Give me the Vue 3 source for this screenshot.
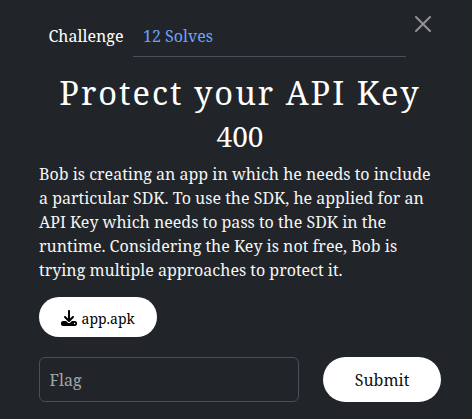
<script setup>
const lines = [
  'Bob is creating an app in which he needs to include',
  'a particular SDK. To use the SDK, he applied for an',
  'API Key which needs to pass to the SDK in the',
  'runtime. Considering the Key is not free, Bob is',
  'trying multiple approaches to protect it.',
]
</script>

<template>
  <main class="modal">
    <header class="top">
      <nav class="tabs">
        <button class="tab active">Challenge</button>
        <button class="tab solves">12 Solves</button>
      </nav>
      <button class="close" aria-label="Close">
        <svg viewBox="0 0 16 16"><path d="M.293.293a1 1 0 0 1 1.414 0L8 6.586 14.293.293a1 1 0 1 1 1.414 1.414L9.414 8l6.293 6.293a1 1 0 0 1-1.414 1.414L8 9.414l-6.293 6.293a1 1 0 0 1-1.414-1.414L6.586 8 .293 1.707a1 1 0 0 1 0-1.414z" /></svg>
      </button>
    </header>
    <h2 class="title">Protect your API Key</h2>
    <h3 class="points">400</h3>
    <p class="description"><span v-for="line in lines" :key="line">{{ line }}</span></p>
    <a class="file">
      <svg viewBox="0 0 512 512"><path d="M288 32c0-17.700-14.300-32-32-32s-32 14.300-32 32v242.700l-73.400-73.400c-12.500-12.500-32.800-12.500-45.300 0s-12.500 32.800 0 45.300l128 128c12.500 12.500 32.800 12.500 45.300 0l128-128c12.500-12.500 12.500-32.800 0-45.300s-32.800-12.500-45.300 0L288 274.700V32zM64 352c-35.300 0-64 28.700-64 64v32c0 35.300 28.700 64 64 64h384c35.300 0 64-28.700 64-64v-32c0-35.300-28.700-64-64-64H346.500l-45.300 45.300c-25 25-65.500 25-90.500 0L165.500 352H64zm368 56a24 24 0 1 1 0 48 24 24 0 1 1 0-48z" /></svg>
      <span>app.apk</span>
    </a>
    <form class="entry" @submit.prevent>
      <input class="flag" placeholder="Flag" aria-label="Flag">
      <button class="submit">Submit</button>
    </form>
  </main>
</template>

<style>
body {
  background: #212529;
}
</style>

<style scoped>
.modal {
  box-sizing: border-box;
  width: 472px;
  height: 419px;
  padding: 16px 31px 0 39px;
  overflow: hidden;
  background: #212529;
  color: #fff;
  font: 16px/24px "Noto Serif", "DejaVu Serif Condensed", "DejaVu Serif", serif;
}
button {
  border: 0;
  padding: 0;
  background: none;
  color: inherit;
  font: inherit;
}
.top {
  display: flex;
  height: 59px;
}
.tabs {
  display: flex;
  width: 367px;
  height: 41px;
}
.tab {
  text-align: left;
  white-space: nowrap;
}
.active {
  width: 94px;
  padding-left: 9.5px;
  border-bottom: 1px solid transparent;
}
.solves {
  flex: 1;
  padding-left: 10px;
  border-bottom: 1px solid #495057;
  color: #6ca3f6;
}
.close {
  width: 16px;
  height: 16px;
  margin-left: 9px;
}
.close svg {
  display: block;
  fill: #909294;
}
.title {
  height: 36px;
  margin: 0;
  text-align: center;
  font-size: 32.6px;
  line-height: 36px;
  font-weight: 400;
  letter-spacing: 2px;
  white-space: nowrap;
}
.points {
  height: 51px;
  margin: 0;
  padding-top: 8px;
  box-sizing: border-box;
  text-align: center;
  font-size: 28px;
  line-height: 34px;
  font-weight: 400;
}
.description {
  margin: 0 0 15px;
  color: #f5f5f5;
}
.description span {
  display: block;
  white-space: nowrap;
}
.file {
  box-sizing: border-box;
  display: flex;
  align-items: center;
  gap: 4.5px;
  width: 118px;
  height: 40px;
  padding: 2px 0 0 22px;
  border-radius: 20px;
  background: #fff;
  color: #000;
  font-size: 14px;
}
.file span {
  padding-top: 2px;
}
.file svg {
  width: 16px;
  height: 16px;
}
.entry {
  display: flex;
  gap: 24px;
  margin-top: 20px;
}
.flag {
  box-sizing: border-box;
  width: 260px;
  height: 45px;
  padding: 0 9.5px;
  border: 1px solid #495057;
  border-radius: 6px;
  background: transparent;
  color: #fff;
  font: inherit;
}
.flag::placeholder {
  color: #a3a6a9;
  opacity: 1;
}
.submit {
  width: 118px;
  height: 45px;
  border-radius: 23px;
  background: #fff;
  color: #111;
}
</style>
